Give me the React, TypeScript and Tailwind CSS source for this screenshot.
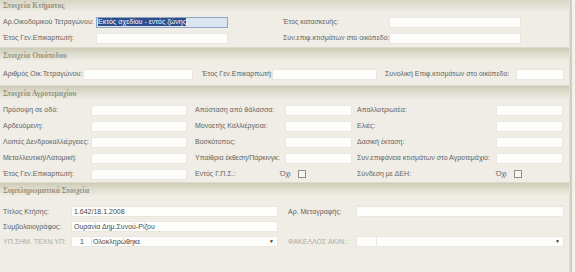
import React from 'react';

const font = { fontFamily: '"Liberation Sans", Arial, sans-serif' };

function Header({ title, first }: { title: string; first?: boolean }) {
  return (
    <div
      className={
        first
          ? 'flex h-[11px] items-center bg-gradient-to-b from-[#d8d6c4] to-[#eceae1] px-[3px]'
          : 'flex h-[14px] items-end border-t border-[#dcdaca] bg-gradient-to-b from-[#cecbb6] via-[#e0decf] to-[#eeece4] px-[3px] pb-[1px]'
      }
    >
      <span
        className="text-[7.5px] font-bold leading-[8px] text-[#959383]"
        style={{ fontFamily: '"Liberation Serif", "Times New Roman", serif' }}
      >
        {title}
      </span>
    </div>
  );
}

function Label({ children, muted }: { children: React.ReactNode; muted?: boolean }) {
  return (
    <span className={`whitespace-nowrap text-[7px] leading-[8px] ${muted ? 'text-[#ababa6]' : 'text-[#636363]'}`}>
      {children}
    </span>
  );
}

function Field({ value }: { value?: string }) {
  return (
    <div className="flex h-[11px] items-center border border-[#e8e6de] bg-[#fdfdfb] px-[2px] text-[7px] leading-[8px] text-[#4a4a4a]">
      {value}
    </div>
  );
}

function Check({ shift }: { shift?: boolean }) {
  return (
    <div className={`flex items-center gap-[7px] ${shift ? '-ml-[5px]' : ''}`}>
      <Label>Όχι</Label>
      <div className="h-[8px] w-[8px] border border-[#8f8f8a] bg-[#f5f5f1]" />
    </div>
  );
}

function Select({ code, text }: { code?: string; text?: string }) {
  return (
    <div className="flex h-[11px] items-center border border-[#e8e6de] bg-[#fdfdfb] text-[7px] leading-[8px] text-[#4a4a4a]">
      <div className="flex h-full w-[20px] items-center border-r border-[#e8e6de] pl-[8px]">{code}</div>
      <div className="flex-1 pl-[1px]">{text}</div>
      <span className="pr-[3px] text-[5px] leading-[5px] text-[#333]">▼</span>
    </div>
  );
}

export default function App() {
  return (
    <div className="flex h-[272px] w-[575px] overflow-hidden bg-[#efede6]" style={font}>
      <div className="w-[569px]">
        {/* Στοιχεία Κτήματος */}
        <Header title="Στοιχεία Κτήματος" first />
        <div className="grid grid-cols-[93px_132px_55px_106px_132px] px-[3px] pt-[3px] pb-[1px] [&>*]:h-[16px]">
          <div className="flex items-center"><Label>Αρ.Οικοδομικού Τετραγώνου:</Label></div>
          <div className="flex items-center">
            <div className="flex h-[11px] w-full items-center border border-[#8fa6c4] bg-[#dae5f1] px-[1px] text-[7px] leading-[8px]">
              <span className="bg-[#2d4d8c] text-white">Εκτός σχεδίου - εντός ζώνης</span>
            </div>
          </div>
          <div />
          <div className="flex items-center"><Label>Έτος κατασκευής:</Label></div>
          <div className="flex items-center [&>*]:w-full"><Field /></div>

          <div className="flex items-center"><Label>Έτος Γεν.Επικαρπωτή:</Label></div>
          <div className="flex items-center [&>*]:w-full"><Field /></div>
          <div />
          <div className="flex items-center"><Label>Συν.επιφ.κτισμάτων στο οικόπεδο:</Label></div>
          <div className="flex items-center [&>*]:w-full"><Field /></div>
        </div>

        {/* Στοιχεία Οικόπεδου */}
        <Header title="Στοιχεία Οικόπεδου" />
        <div className="grid grid-cols-[80px_110px_9px_70px_105px_8px_131px_48px] px-[3px] pt-[5px] pb-[3px] [&>*]:h-[16px]">
          <div className="flex items-center"><Label>Αριθμός Οικ.Τετραγώνου:</Label></div>
          <div className="flex items-center [&>*]:w-full"><Field /></div>
          <div />
          <div className="flex items-center"><Label>Έτος Γεν.Επικαρπωτή:</Label></div>
          <div className="flex items-center [&>*]:w-full"><Field /></div>
          <div />
          <div className="flex items-center"><Label>Συνολική Επιφ.κτισμάτων στο οικόπεδο:</Label></div>
          <div className="flex items-center [&>*]:w-full"><Field /></div>
        </div>

        {/* Στοιχεία Αγροτεμαχίου */}
        <Header title="Στοιχεία Αγροτεμαχίου" />
        <div className="grid grid-cols-[88px_96px_8px_90px_67px_5px_139px_67px] px-[3px] pt-[3px] [&>*]:h-[16px]">
          <div className="flex items-center"><Label>Πρόσοψη σε οδό:</Label></div>
          <div className="flex items-center [&>*]:w-full"><Field /></div>
          <div />
          <div className="flex items-center"><Label>Απόσταση από θάλασσα:</Label></div>
          <div className="flex items-center [&>*]:w-full"><Field /></div>
          <div />
          <div className="flex items-center"><Label>Απαλλοτριωτέα:</Label></div>
          <div className="flex items-center [&>*]:w-full"><Field /></div>

          <div className="flex items-center"><Label>Αρδευόμενη:</Label></div>
          <div className="flex items-center [&>*]:w-full"><Field /></div>
          <div />
          <div className="flex items-center"><Label>Μονοετής Καλλιέργειαι:</Label></div>
          <div className="flex items-center [&>*]:w-full"><Field /></div>
          <div />
          <div className="flex items-center"><Label>Ελιές:</Label></div>
          <div className="flex items-center [&>*]:w-full"><Field /></div>

          <div className="flex items-center"><Label>Λοιπές Δενδροκαλλιέργειες:</Label></div>
          <div className="flex items-center [&>*]:w-full"><Field /></div>
          <div />
          <div className="flex items-center"><Label>Βοσκότοπος:</Label></div>
          <div className="flex items-center [&>*]:w-full"><Field /></div>
          <div />
          <div className="flex items-center"><Label>Δασική έκταση:</Label></div>
          <div className="flex items-center [&>*]:w-full"><Field /></div>

          <div className="flex items-center"><Label>Μεταλλευτική/Λατομική:</Label></div>
          <div className="flex items-center [&>*]:w-full"><Field /></div>
          <div />
          <div className="flex items-center"><Label>Υπαίθρια έκθεση/Πάρκινγκ:</Label></div>
          <div className="flex items-center [&>*]:w-full"><Field /></div>
          <div />
          <div className="flex items-center"><Label>Συν.επιφάνεια κτισμάτων στο Αγροτεμάχιο:</Label></div>
          <div className="flex items-center [&>*]:w-full"><Field /></div>

          <div className="flex items-center"><Label>Έτος Γεν.Επικαρπωτή:</Label></div>
          <div className="flex items-center [&>*]:w-full"><Field /></div>
          <div />
          <div className="flex items-center"><Label>Εντός Γ.Π.Σ.:</Label></div>
          <div className="flex items-center"><Check shift /></div>
          <div />
          <div className="flex items-center"><Label>Σύνδεση με ΔΕΗ:</Label></div>
          <div className="flex items-center"><Check /></div>
        </div>

        {/* Συμπληρωματικά Στοιχεία */}
        <Header title="Συμπληρωματικά Στοιχεία" />
        <div className="grid grid-cols-[68px_207px_10px_68px_208px] px-[3px] pt-[8px] [&>*]:h-[15px]">
          <div className="flex items-center"><Label>Τίτλος Κτήσης:</Label></div>
          <div className="flex items-center [&>*]:w-full"><Field value="1.642/18.1.2008" /></div>
          <div />
          <div className="flex items-center"><Label>Αρ. Μεταγραφής:</Label></div>
          <div className="flex items-center [&>*]:w-full"><Field /></div>

          <div className="flex items-center"><Label>Συμβολαιογράφος:</Label></div>
          <div className="flex items-center [&>*]:w-full"><Field value="Ουρανία Δημ.Συνού-Ρίζου" /></div>
          <div />
          <div />
          <div />

          <div className="flex items-center"><Label muted>ΥΠ.ΣΗΜ. ΤΕΧΝ.ΥΠ:</Label></div>
          <div className="flex items-center [&>*]:w-full"><Select code="1" text="Ολοκληρώθηκε" /></div>
          <div />
          <div className="flex items-center"><Label muted>ΦΑΚΕΛΛΟΣ ΑΚΙΝ.:</Label></div>
          <div className="flex items-center [&>*]:w-full"><Select /></div>
        </div>
      </div>
      <div className="flex w-[6px]">
        <div className="w-[1px] bg-[#e2e0d4]" />
        <div className="w-[2px] bg-[#cfcdbd]" />
        <div className="flex-1 bg-[#f2f1ec]" />
      </div>
    </div>
  );
}
